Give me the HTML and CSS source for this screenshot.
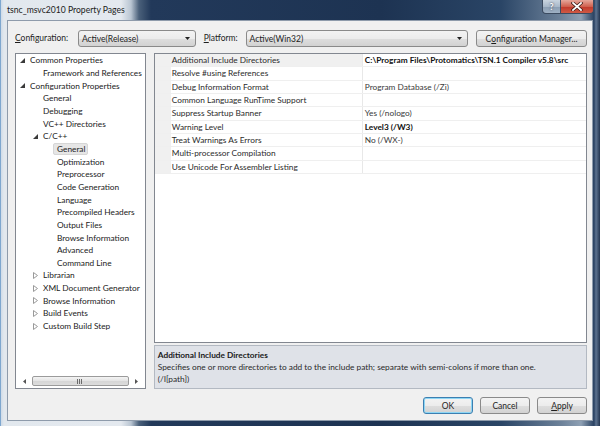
FILE: index.html
```html
<!DOCTYPE html>
<html>
<head>
<meta charset="utf-8">
<link rel="stylesheet" href="styles.css">
</head>
<body>
<div class="window">
  <div class="titlebar">
    <span class="title">tsnc_msvc2010 Property Pages</span>
    <div class="capbtns">
      <div class="cap help">?</div>
      <div class="cap close"><svg width="12" height="9" viewBox="0 0 12 9"><path d="M2 1 L10 8 M10 1 L2 8" stroke="#3a1a14" stroke-width="3.2" stroke-linecap="square"/><path d="M2 1 L10 8 M10 1 L2 8" stroke="#ffffff" stroke-width="1.8" stroke-linecap="square"/></svg></div>
    </div>
  </div>
  <div class="client">
    <div class="config-row">
      <span class="lbl lbl-conf"><u>C</u>onfiguration:</span>
      <div class="combo combo-conf"><span>Active(Release)</span><svg class="dd" width="5" height="3" viewBox="0 0 5 3"><path d="M0 0 H5 L2.5 3 Z" fill="#222"/></svg></div>
      <span class="lbl lbl-plat"><u>P</u>latform:</span>
      <div class="combo combo-plat"><span>Active(Win32)</span><svg class="dd" width="5" height="3" viewBox="0 0 5 3"><path d="M0 0 H5 L2.5 3 Z" fill="#222"/></svg></div>
      <div class="btn btn-mgr">C<u>o</u>nfiguration Manager...</div>
    </div>
    <div class="main">
      <div class="tree">
        <div class="items">
          <div class="row l0"><span class="tw"><svg width="5" height="5" viewBox="0 0 5 5"><path d="M5 0 V5 H0 Z" fill="#3a3a3a"/></svg></span><span>Common Properties</span></div>
          <div class="row l1"><span class="tw"></span><span>Framework and References</span></div>
          <div class="row l0"><span class="tw"><svg width="5" height="5" viewBox="0 0 5 5"><path d="M5 0 V5 H0 Z" fill="#3a3a3a"/></svg></span><span>Configuration Properties</span></div>
          <div class="row l1"><span class="tw"></span><span>General</span></div>
          <div class="row l1"><span class="tw"></span><span>Debugging</span></div>
          <div class="row l1"><span class="tw"></span><span>VC++ Directories</span></div>
          <div class="row l1"><span class="tw"><svg width="5" height="5" viewBox="0 0 5 5"><path d="M5 0 V5 H0 Z" fill="#3a3a3a"/></svg></span><span>C/C++</span></div>
          <div class="row l2"><span class="tw"></span><span class="sel">General</span></div>
          <div class="row l2"><span class="tw"></span><span>Optimization</span></div>
          <div class="row l2"><span class="tw"></span><span>Preprocessor</span></div>
          <div class="row l2"><span class="tw"></span><span>Code Generation</span></div>
          <div class="row l2"><span class="tw"></span><span>Language</span></div>
          <div class="row l2"><span class="tw"></span><span>Precompiled Headers</span></div>
          <div class="row l2"><span class="tw"></span><span>Output Files</span></div>
          <div class="row l2"><span class="tw"></span><span>Browse Information</span></div>
          <div class="row l2"><span class="tw"></span><span>Advanced</span></div>
          <div class="row l2"><span class="tw"></span><span>Command Line</span></div>
          <div class="row l1"><span class="tw"><svg width="5" height="7" viewBox="0 0 5 7"><path d="M0.5 0.5 L4.5 3.5 L0.5 6.5 Z" fill="none" stroke="#9a9a9a" stroke-width="1"/></svg></span><span>Librarian</span></div>
          <div class="row l1"><span class="tw"><svg width="5" height="7" viewBox="0 0 5 7"><path d="M0.5 0.5 L4.5 3.5 L0.5 6.5 Z" fill="none" stroke="#9a9a9a" stroke-width="1"/></svg></span><span>XML Document Generator</span></div>
          <div class="row l1"><span class="tw"><svg width="5" height="7" viewBox="0 0 5 7"><path d="M0.5 0.5 L4.5 3.5 L0.5 6.5 Z" fill="none" stroke="#9a9a9a" stroke-width="1"/></svg></span><span>Browse Information</span></div>
          <div class="row l1"><span class="tw"><svg width="5" height="7" viewBox="0 0 5 7"><path d="M0.5 0.5 L4.5 3.5 L0.5 6.5 Z" fill="none" stroke="#9a9a9a" stroke-width="1"/></svg></span><span>Build Events</span></div>
          <div class="row l1"><span class="tw"><svg width="5" height="7" viewBox="0 0 5 7"><path d="M0.5 0.5 L4.5 3.5 L0.5 6.5 Z" fill="none" stroke="#9a9a9a" stroke-width="1"/></svg></span><span>Custom Build Step</span></div>
        </div>
        <div class="hscroll">
          <span class="sarrow"><svg width="3" height="5" viewBox="0 0 3 5"><path d="M3 0 V5 L0 2.5 Z" fill="#555"/></svg></span>
          <div class="thumb"><svg width="6" height="5" viewBox="0 0 6 5"><path d="M0.5 0 V5 M2.5 0 V5 M4.5 0 V5" stroke="#6b6b6b" stroke-width="1"/></svg></div>
          <span class="sarrow"><svg width="3" height="5" viewBox="0 0 3 5"><path d="M0 0 V5 L3 2.5 Z" fill="#555"/></svg></span>
        </div>
      </div>
      <div class="right">
        <div class="grid">
          <div class="grow selrow"><span class="gut"></span><span class="name">Additional Include Directories</span><span class="val b">C:\Program Files\Protomatics\TSN.1 Compiler v5.8\src</span></div>
          <div class="grow"><span class="gut"></span><span class="name">Resolve #using References</span><span class="val"></span></div>
          <div class="grow"><span class="gut"></span><span class="name">Debug Information Format</span><span class="val">Program Database (/Zi)</span></div>
          <div class="grow"><span class="gut"></span><span class="name">Common Language RunTime Support</span><span class="val"></span></div>
          <div class="grow"><span class="gut"></span><span class="name">Suppress Startup Banner</span><span class="val">Yes (/nologo)</span></div>
          <div class="grow"><span class="gut"></span><span class="name">Warning Level</span><span class="val b">Level3 (/W3)</span></div>
          <div class="grow"><span class="gut"></span><span class="name">Treat Warnings As Errors</span><span class="val">No (/WX-)</span></div>
          <div class="grow"><span class="gut"></span><span class="name">Multi-processor Compilation</span><span class="val"></span></div>
          <div class="grow"><span class="gut"></span><span class="name">Use Unicode For Assembler Listing</span><span class="val"></span></div>
        </div>
        <div class="desc">
          <div class="dtitle">Additional Include Directories</div>
          <div class="dtext">Specifies one or more directories to add to the include path; separate with semi-colons if more than one.</div>
          <div class="dtext">(/I[path])</div>
        </div>
      </div>
    </div>
    <div class="buttons">
      <div class="btn btn-ok">OK</div>
      <div class="btn btn-cancel">Cancel</div>
      <div class="btn btn-apply"><u>A</u>pply</div>
    </div>
  </div>
</div>
</body>
</html>
```
FILE: styles.css
```css
* { box-sizing: border-box; }
html, body { margin: 0; padding: 0; }
body {
  width: 600px;
  height: 426px;
  overflow: hidden;
  font-family: "Lato", "Open Sans", sans-serif;
  font-size: 8.3px;
  color: #1e1e1e;
}
.window {
  width: 600px;
  height: 426px;
  display: flex;
  flex-direction: column;
  background: linear-gradient(90deg, #cfdbe8 0px, #e2e8ee 3px, #e4e9ef 120px, #b9c5d2 130px, #4a607a 138px, #22395a 150px, #1d3352 380px, #2a4566 500px, #6c8199 560px, #8ea0b4 580px, #2a4262 593px, #5d7390 595px, #14253f 600px);
  border-left: 1px solid #7ea7cf;
}
.titlebar {
  height: 20px;
  flex: none;
  display: flex;
  align-items: flex-start;
  padding-left: 6px;
  padding-right: 6px;
}
.title {
  font-size: 8.6px;
  line-height: 20px;
  color: #1b1b1b;
}
.capbtns {
  margin-left: auto;
  display: flex;
}
.cap {
  height: 14px;
  display: flex;
  align-items: center;
  justify-content: center;
  border: 1px solid #3b4b60;
  border-top: none;
}
.help {
  width: 19px;
  border-radius: 0 0 0 4px;
  background: linear-gradient(#c9d4df, #a9b9ca 50%, #8a9db2 51%, #9fb1c4);
  color: #fff;
  font-weight: bold;
  font-size: 9px;
  text-shadow: 0 0 2px #223;
}
.close {
  width: 33px;
  border-left: none;
  border-radius: 0 0 4px 0;
  background: linear-gradient(#e5a79b, #d0614f 50%, #c0382a 51%, #cf5a45);
}
.client {
  flex: 1;
  margin: 0 7px 5px 6px;
  border: 1px solid #8e9bab;
  background: #f0f0f0;
  padding: 9px 5px 6px 7px;
  display: flex;
  flex-direction: column;
}
.config-row {
  height: 17px;
  display: flex;
  align-items: center;
  font-size: 8.5px;
}
.lbl { line-height: 17px; }
.lbl-conf { width: 63px; }
.lbl-plat { width: 42px; margin-left: 8px; }
.combo, .btn {
  height: 17px;
  border: 1px solid #8a8a8a;
  border-radius: 3px;
  background: linear-gradient(#f3f3f3, #ececec 50%, #dedede 51%, #d2d2d2);
  display: flex;
  align-items: center;
}
.combo { padding: 0 5px 0 3px; justify-content: space-between; }
.combo-conf { width: 118px; }
.combo-plat { width: 223px; }
.btn { justify-content: center; font-size: 8.5px; }
.btn-mgr { width: 111px; margin-left: 8px; }
.main {
  height: 336px;
  margin-top: 6px;
  display: flex;
  gap: 8px;
}
.tree {
  width: 131px;
  border: 1px solid #828790;
  background: #fff;
  display: flex;
  flex-direction: column;
}
.items { flex: 1; }
.row {
  height: 12.67px;
  display: flex;
  align-items: center;
  white-space: nowrap;
  color: #222;
}
.l0 { padding-left: 4px; }
.l1 { padding-left: 17px; }
.l2 { padding-left: 31px; }
.tw {
  width: 10px;
  flex: none;
  display: flex;
  align-items: center;
}
.sel {
  background: #e6e6e6;
  border: 1px solid #d6d6d6;
  border-radius: 2px;
  margin-left: -4px;
  padding: 0 2px 0 3px;
  line-height: 10.5px;
}
.hscroll {
  height: 12px;
  margin: 0 0 1px 0;
  display: flex;
  align-items: center;
  padding: 0 2px;
  gap: 2px;
}
.sarrow {
  width: 12px;
  display: flex;
  justify-content: center;
}
.thumb {
  flex: 1;
  height: 10px;
  border: 1px solid #9b9b9b;
  border-radius: 2px;
  background: linear-gradient(#f4f4f4, #e3e3e3 50%, #d6d6d6 51%, #dcdcdc);
  display: flex;
  align-items: center;
  justify-content: center;
}
.right {
  width: 434px;
  display: flex;
  flex-direction: column;
  gap: 2px;
}
.grid {
  flex: 1;
  border: 1px solid #828790;
  background: #fff;
}
.grow {
  height: 13.33px;
  display: flex;
  border-bottom: 1px solid #efefef;
  white-space: nowrap;
}
.gut {
  width: 16px;
  flex: none;
  background: #f0f0f0;
}
.name {
  width: 192px;
  flex: none;
  padding-left: 1px;
  border-right: 1px solid #e8e8e8;
  line-height: 12.33px;
  color: #2b2b2b;
}
.selrow .name { background: #f0f0f0; }
.val {
  flex: 1;
  padding-left: 2px;
  line-height: 12.33px;
  color: #3a3a3a;
  overflow: hidden;
}
.b { font-weight: bold; color: #111; }
.desc {
  height: 44px;
  flex: none;
  background: #dfe2e8;
  border: 1px solid #b3b9c2;
  padding: 3px 3px 0 3px;
}
.dtitle { font-weight: bold; line-height: 12px; color: #1a1a1a; }
.dtext { line-height: 12px; color: #2a2a2a; white-space: nowrap; }
.buttons {
  height: 17px;
  margin-top: 8px;
  display: flex;
  justify-content: flex-end;
  gap: 7px;
}
.buttons .btn { width: 50px; }
.btn-ok {
  border-color: #3c7fb1;
  box-shadow: inset 0 0 0 1px #8ed6f4;
}
```
